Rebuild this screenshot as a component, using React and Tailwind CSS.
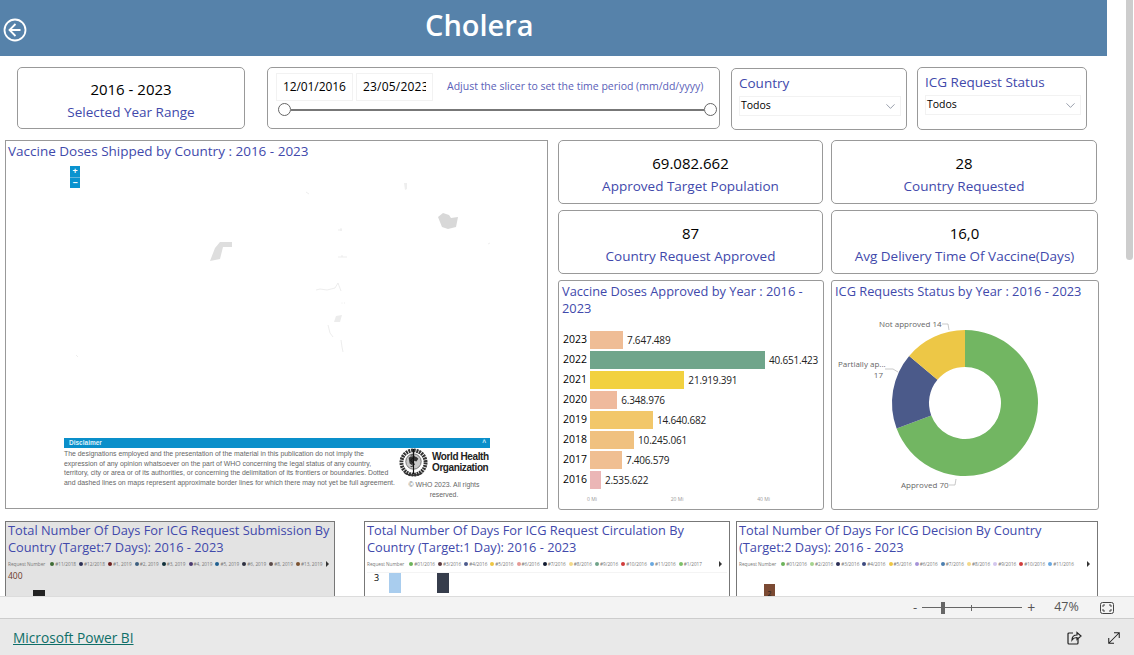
import React from "react";
import { ChevronDown } from "lucide-react";

const barData = [
  { year: "2023", value: 7647489, label: "7.647.489", color: "bg-[#efbd96]" },
  { year: "2022", value: 40651423, label: "40.651.423", color: "bg-[#70a58b]" },
  { year: "2021", value: 21919391, label: "21.919.391", color: "bg-[#f2d13f]" },
  { year: "2020", value: 6348976, label: "6.348.976", color: "bg-[#efba9d]" },
  { year: "2019", value: 14640682, label: "14.640.682", color: "bg-[#f2c76a]" },
  { year: "2018", value: 10245061, label: "10.245.061", color: "bg-[#f0c180]" },
  { year: "2017", value: 7406579, label: "7.406.579", color: "bg-[#f0bf92]" },
  { year: "2016", value: 2535622, label: "2.535.622", color: "bg-[#ebb6b6]" },
];

const legendSubmission = [
  ["#11/2018", "#3f6b35"],
  ["#12/2018", "#2b2f55"],
  ["#1, 2019", "#6b2020"],
  ["#2, 2019", "#3d5f80"],
  ["#3, 2019", "#10303a"],
  ["#4, 2019", "#4a3a70"],
  ["#5, 2019", "#1f5f90"],
  ["#6, 2019", "#2d3040"],
  ["#8, 2019", "#5a4a48"],
  ["#13, 2019", "#7b5230"],
];

const legendCirculation = [
  ["#01/2016", "#6cb35a"],
  ["#3/2016", "#5a3a40"],
  ["#4/2016", "#4c5a8c"],
  ["#5/2016", "#eec643"],
  ["#6/2016", "#e59a96"],
  ["#7/2016", "#111a30"],
  ["#8/2016", "#f3d98a"],
  ["#9/2016", "#6fa38a"],
  ["#10/2016", "#d03c3c"],
  ["#11/2016", "#6aa8e0"],
  ["#1/2017", "#7cc06a"],
];

const legendDecision = [
  ["#01/2016", "#6cb35a"],
  ["#2/2016", "#a5d38f"],
  ["#3/2016", "#2b2f55"],
  ["#4/2016", "#3d4a80"],
  ["#5/2016", "#eec643"],
  ["#6/2016", "#a593d8"],
  ["#7/2016", "#4c7fb0"],
  ["#8/2016", "#f3d98a"],
  ["#9/2016", "#d3c6ee"],
  ["#10/2016", "#d03c3c"],
  ["#11/2016", "#6aa8e0"],
];

const titleClass = "text-[12.800px] leading-[17px] text-[#4149ab]";

function Kpi({ value, label, className }) {
  return (
    <div
      className={`flex flex-col items-center justify-center rounded-[5px] border border-[#999] bg-white pt-[3px] ${className}`}
    >
      <div className="text-[15px] leading-[20px] text-black">{value}</div>
      <div className="mt-[4px] text-[13.500px] leading-[18px] text-[#4149ab]">{label}</div>
    </div>
  );
}

function Dropdown({ title, className, boxClass }) {
  return (
    <div className={`rounded-[5px] border border-[#999] bg-white ${className}`}>
      <div className="text-[13.500px] leading-[18px] text-[#4149ab]">{title}</div>
      <div
        className={`mt-[4px] flex h-[20px] items-center justify-between border border-[#f2f2f2] pl-[1px] pr-[2px] text-[10.500px] text-black ${boxClass}`}
      >
        Todos
        <ChevronDown size={15} strokeWidth={1} className="text-[#5a6478]" />
      </div>
    </div>
  );
}

function Legend({ items }) {
  return (
    <div className="mt-[3px] flex h-[10px] items-center text-[4.700px] leading-none whitespace-nowrap text-[#777]">
      <span className="mr-[5px]">Request Number</span>
      {items.map(([name, color]) => (
        <span key={name} className="mr-[3px] flex items-center gap-[1px]">
          <span className="h-[4px] w-[4px] rounded-full" style={{ backgroundColor: color }} />
          {name}
        </span>
      ))}
      <span className="ml-auto mr-[5px] h-0 w-0 border-y-[3px] border-l-[3px] border-y-transparent border-l-[#333]" />
    </div>
  );
}

function MapShapes() {
  return (
    <svg viewBox="0 0 541 367" className="h-full w-full">
      <g transform="translate(-1 -1)">
        <polygon points="205,121 210,108 215,102 227,102 227,107 218,107 215,119" fill="#dedede" />
        <polygon points="433,77 438,73 444,75 446,78 453,77 451,87 443,89 437,87" fill="#d8d8d8" />
        <polygon points="399,43 402,43 402,49 400,50" fill="#eeeeee" />
        <polygon points="329,182 331,176 337,175 335,182" fill="#ececec" />
        <g fill="none" stroke="#e8e8e8" strokeWidth="0.8">
          <path d="M301 52l3 2" />
          <path d="M333 90h4M336 88v3" />
          <path d="M333 117h9M337 115v2" />
          <path d="M311 150l4-1 7 1 8-2 3-5 3 8" />
          <path d="M323 185l2 8 3 4" />
          <path d="M336 200l1 7 1 5" />
          <path d="M71 215l2 2" />
          <path d="M483 104l2-1" />
          <path d="M336.500 163h1M339 163h1" />
        </g>
      </g>
    </svg>
  );
}

// simplified WHO emblem: wreath, globe and staff
function WhoEmblem() {
  return (
    <svg viewBox="0 0 32 30" className="h-[29px] w-[31px] shrink-0">
      <circle cx="16" cy="15" r="12.500" fill="none" stroke="#333" strokeWidth="4" strokeDasharray="2 0.800" />
      <circle cx="16" cy="14" r="8" fill="#c9c9c9" stroke="#333" strokeWidth="0.6" />
      <path d="M11 10c3-2 7-2 10 1l-2 3-3-1-1 5-3-2z" fill="#333" />
      <path d="M16 1v26" stroke="#111" strokeWidth="1.200" />
      <path d="M13 8c2-2 5 0 3 2s-4 2-2 4 4 2 2 4-3 1-3 1" fill="none" stroke="#111" strokeWidth="1" />
      <path d="M7 26c5 3 13 3 18 0" fill="none" stroke="#333" strokeWidth="1.500" />
    </svg>
  );
}

function MapPanel() {
  return (
    <div className="relative h-[369px] w-[543px] shrink-0 border border-[#999] bg-white">
      <div className={`${titleClass} pl-[2px] pt-[2px] text-[13.500px]`}>Vaccine Doses Shipped by Country : 2016 - 2023</div>
      <div className="absolute inset-0">
        <MapShapes />
      </div>
      <div className="absolute left-[64px] top-[25px] flex h-[22px] w-[10px] flex-col gap-px rounded-[1px] bg-[#63b5dc] text-center text-[9px] font-bold leading-[10px] text-white">
        <div className="h-[10.500px] bg-[#0a93cf]">+</div>
        <div className="h-[10.500px] bg-[#0a93cf]">−</div>
      </div>
      <div className="absolute left-[58px] top-[297px] w-[426px]">
        <div className="flex h-[10px] items-center justify-between bg-[#0a8fca] pl-[5px] pr-[4px] font-['Liberation_Sans',sans-serif] text-[6.500px] font-bold text-[#dff1fa]">
          <span>Disclaimer</span>
          <span>^</span>
        </div>
        <div className="flex font-['Liberation_Sans',sans-serif] text-[6.900px] leading-[9.500px] text-[#666]">
          <p className="mt-[1px] w-[333px] shrink-0 whitespace-nowrap">
            The designations employed and the presentation of the material in this publication do not imply the
            <br />
            expression of any opinion whatsoever on the part of WHO concerning the legal status of any country,
            <br />
            territory, city or area or of its authorities, or concerning the delimitation of its frontiers or boundaries. Dotted
            <br />
            and dashed lines on maps represent approximate border lines for which there may not yet be full agreement.
          </p>
          <div className="ml-auto w-[92px]">
            <div className="flex items-center">
              <WhoEmblem />
              <div className="ml-[3px] whitespace-nowrap text-[10px] font-bold leading-[10.500px] tracking-[-0.4px] text-[#222]">
                World Health
                <br />
                Organization
              </div>
            </div>
            <div className="mt-[3px] text-center">
              © WHO 2023. All rights
              <br />
              reserved.
            </div>
          </div>
        </div>
      </div>
    </div>
  );
}

function BarsPanel() {
  return (
    <div className="flex h-[230px] w-[266px] shrink-0 flex-col rounded-[3px] border border-[#999] bg-white px-[3px]">
      <div className={`${titleClass} mt-[2px]`}>Vaccine Doses Approved by Year : 2016 - 2023</div>
      <div className="mt-[14px] flex flex-col gap-[2px]">
        {barData.map((row) => (
          <div key={row.year} className="flex h-[18px] items-center">
            <span className="w-[28px] pl-[1px] text-[10.500px] text-black">{row.year}</span>
            <div className={`h-[18px] ${row.color}`} style={{ width: (row.value / 1000000) * 4.305 }} />
            <span className="ml-[4px] mt-[1px] whitespace-nowrap text-[10px] tracking-[-0.2px] text-[#222]">{row.label}</span>
          </div>
        ))}
      </div>
      <div className="ml-[25px] mt-[7px] flex w-[183px] justify-between text-[5px] leading-[6px] text-[#999]">
        <span>0 Mi</span>
        <span>20 Mi</span>
        <span>40 Mi</span>
      </div>
    </div>
  );
}

function polar(cx, cy, r, turn) {
  const a = turn * 2 * Math.PI;
  return [cx + r * Math.sin(a), cy - r * Math.cos(a)];
}

function arc(cx, cy, outer, inner, from, to) {
  const big = to - from > 0.5 ? 1 : 0;
  const [x1, y1] = polar(cx, cy, outer, from);
  const [x2, y2] = polar(cx, cy, outer, to);
  const [x3, y3] = polar(cx, cy, inner, to);
  const [x4, y4] = polar(cx, cy, inner, from);
  return `M${x1} ${y1}A${outer} ${outer} 0 ${big} 1 ${x2} ${y2}L${x3} ${y3}A${inner} ${inner} 0 ${big} 0 ${x4} ${y4}Z`;
}

function StatusPanel() {
  const total = 101;
  const a = 70 / total;
  const b = (70 + 17) / total;
  return (
    <div className="h-[230px] w-[268px] shrink-0 rounded-[3px] border border-[#999] bg-white">
      <div className={`${titleClass} mt-[2px] pl-[3px]`}>ICG Requests Status by Year : 2016 - 2023</div>
      <svg viewBox="0 0 266 208" className="h-[208px] w-[266px]">
        <path d={arc(133, 103, 73, 36, 0, a)} fill="#72b662" />
        <path d={arc(133, 103, 73, 36, a, b)} fill="#4b5a8a" />
        <path d={arc(133, 103, 73, 36, b, 1)} fill="#edc746" />
        <g fill="none" stroke="#bbb" strokeWidth="0.8">
          <path d="M110 24h6l1 6" />
          <path d="M53 69h8l5 3" />
          <path d="M117 185h6l1-6" />
        </g>
        <g fontSize="8" fill="#666">
          <text x="47" y="27">Not approved 14</text>
          <text x="6" y="67">Partially ap...</text>
          <text x="51" y="78" textAnchor="end">17</text>
          <text x="69" y="188">Approved 70</text>
        </g>
      </svg>
    </div>
  );
}

function DaysPanel({ title, items, className, children }) {
  return (
    <div className={`h-[90px] shrink-0 overflow-hidden border border-[#777] px-[2px] ${className}`}>
      <div className={titleClass}>{title}</div>
      <Legend items={items} />
      {children}
    </div>
  );
}

function App() {
  return (
    <div className="flex h-[655px] w-[1134px] flex-col overflow-hidden bg-white font-['Open_Sans','Noto_Sans',sans-serif]">
      <div className="relative flex h-[596px] shrink-0 overflow-hidden">
        <div className="w-[1107px] shrink-0">
          <header className="flex h-[56px] items-center bg-[#5682aa] pl-[3px]">
            <svg viewBox="0 0 24 24" className="h-[24px] w-[24px] translate-y-[2px]" fill="none" stroke="#fff" strokeWidth="1.800">
              <circle cx="12" cy="12" r="10.500" />
              <path d="M12.500 6l-6 6 6 6M6.500 12h11" />
            </svg>
            <h1 className="mb-[8px] ml-[398px] text-[29px] font-semibold leading-none text-white">Cholera</h1>
          </header>

          <div className="mt-[11px] flex h-[63px] items-start pl-[17px]">
            <div className="flex h-[62px] w-[228px] flex-col items-center justify-center rounded-[5px] border border-[#999] pt-[3px]">
              <div className="text-[15px] leading-[20px] text-black">2016 - 2023</div>
              <div className="mt-[4px] text-[13.500px] leading-[18px] text-[#4149ab]">Selected Year Range</div>
            </div>

            <div className="ml-[22px] h-[62px] w-[453px] rounded-[5px] border border-[#999] pl-[10px] pr-[2px] pt-[5px]">
              <div className="-ml-[2px] flex gap-[3px]">
                <div className="flex h-[28px] w-[77px] items-center overflow-hidden border border-[#f2f2f2] pl-[6px] text-[12px] tracking-[-0.1px] whitespace-nowrap text-black">
                  12/01/2016
                </div>
                <div className="flex h-[28px] w-[77px] items-center overflow-hidden border border-[#f2f2f2] pl-[6px] text-[12px] whitespace-nowrap text-black">
                  <span className="block w-[63px] overflow-hidden tracking-[0.2px]">23/05/2023</span>
                </div>
                <div className="ml-[11px] text-[10.500px] leading-[26px] whitespace-nowrap text-[#5a60b8]">
                  Adjust the slicer to set the time period (mm/dd/yyyy)
                </div>
              </div>
              <div className="mt-[2px] flex items-center">
                <span className="h-[13px] w-[13px] shrink-0 rounded-full border border-[#666] bg-white" />
                <span className="h-[2px] flex-1 bg-[#777]" />
                <span className="h-[13px] w-[13px] shrink-0 rounded-full border border-[#666] bg-white" />
              </div>
            </div>

            <Dropdown
              title="Country"
              className="ml-[11px] mt-[1px] h-[62px] w-[176px] px-[7px] pt-[5px]"
              boxClass="w-[162px]"
            />
            <Dropdown
              title="ICG Request Status"
              className="ml-[10px] h-[63px] w-[170px] px-[7px] pt-[5px]"
              boxClass="w-[156px]"
            />
          </div>

          <div className="mt-[10px] flex items-start pl-[5px]">
            <MapPanel />
            <div className="ml-[10px] flex w-[540px] flex-col">
              <div className="flex gap-[8px]">
                <Kpi value="69.082.662" label="Approved Target Population" className="h-[64px] w-[265px]" />
                <Kpi value="28" label="Country Requested" className="h-[64px] w-[266px]" />
              </div>
              <div className="mt-[6px] flex gap-[8px]">
                <Kpi value="87" label="Country Request Approved" className="h-[64px] w-[265px]" />
                <Kpi value="16,0" label="Avg Delivery Time Of Vaccine(Days)" className="h-[64px] w-[267px]" />
              </div>
              <div className="mt-[6px] flex gap-[7px]">
                <BarsPanel />
                <StatusPanel />
              </div>
            </div>
          </div>

          <div className="mt-[11px] flex pl-[5px]">
            <DaysPanel
              title="Total Number Of Days For ICG Request Submission By Country (Target:7 Days): 2016 - 2023"
              items={legendSubmission}
              className="w-[330px] bg-[#e3e3e3]"
            >
              <div className="mt-[2px] text-[8.500px] leading-[10px] text-[#6b3a2a]">400</div>
              <div className="ml-[25px] mt-[9px] h-[6px] w-[12px] bg-[#222]" />
            </DaysPanel>
            <DaysPanel
              title="Total Number Of Days For ICG Request Circulation By Country (Target:1 Day): 2016 - 2023"
              items={legendCirculation}
              className="ml-[29px] w-[366px] bg-white"
            >
              <div className="mt-[3px] flex items-start border-t border-[#f4f4f4]">
                <span className="ml-[7px] w-[15px] text-[9px] leading-[10px] text-black">3</span>
                <div className="h-[20px] w-[12px] bg-[#a9cdee]" />
                <div className="ml-[36px] h-[20px] w-[12px] bg-[#363d4c]" />
              </div>
            </DaysPanel>
            <DaysPanel
              title="Total Number Of Days For ICG Decision By Country (Target:2 Days): 2016 - 2023"
              items={legendDecision}
              className="ml-[6px] w-[362px] bg-white"
            >
              <div className="ml-[25px] mt-[15px] h-[14px] w-[11px] bg-[#7b4a33] text-center text-[7px] leading-[20px] text-[#222]">
                2
              </div>
            </DaysPanel>
          </div>
        </div>

        {/* page scrollbar */}
        <div className="flex-1 bg-white pl-[19px] pr-[1px]">
          <div className="h-[260px] rounded-b-[4px] bg-[#cdcdcd]" />
        </div>
      </div>

      <div className="flex h-[22px] shrink-0 items-center border-t border-[#dcdcdc] bg-[#f3f3f3] text-[#555]">
        <span className="ml-[913px] text-[13px] leading-none">-</span>
        <div className="relative ml-[5px] flex h-[14px] w-[100px] items-center">
          <span className="h-px w-full bg-[#666]" />
          <span className="absolute left-[19px] top-[1px] h-[12px] w-[4px] bg-[#666]" />
          <span className="absolute left-[49px] top-[4px] h-[6px] w-px bg-[#666]" />
        </div>
        <span className="ml-[5px] text-[14px] leading-none">+</span>
        <span className="ml-[19px] text-[12.500px] leading-none">47%</span>
        <svg viewBox="0 0 14 12" className="ml-[21px] h-[12px] w-[14px]" fill="none" stroke="#444" strokeWidth="1">
          <rect x="0.500" y="0.500" width="13" height="11" rx="2" />
          <path d="M3 5V3h2M9 3h2v2M11 7v2H9M5 9H3V7" />
        </svg>
      </div>

      <footer className="flex flex-1 items-center border-t border-[#ccc] bg-[#e9e9e9] pl-[13px] pt-[3px]">
        <a href="#" className="text-[13.700px] text-[#0f6f68] underline">
          Microsoft Power BI
        </a>
        <svg viewBox="0 0 16 16" className="ml-auto h-[16px] w-[16px] -translate-x-[1px] -translate-y-[1px]" fill="none" stroke="#222" strokeWidth="1.200">
          <path d="M7 3H3a1 1 0 0 0-1 1v9a1 1 0 0 0 1 1h8a1 1 0 0 0 1-1V9" />
          <path d="M6 10c0-3 2-5 5-5V2.500l4 3.500-4 3.500V7.500c-2 0-4 1-5 2.500z" />
        </svg>
        <svg viewBox="0 0 16 16" className="ml-[24px] mr-[13px] h-[14px] w-[14px] -translate-y-[1px]" fill="none" stroke="#222" strokeWidth="1.200">
          <path d="M2 14L14 2M8 2h6v6M2 8v6h6" />
        </svg>
      </footer>
    </div>
  );
}

export default App;
